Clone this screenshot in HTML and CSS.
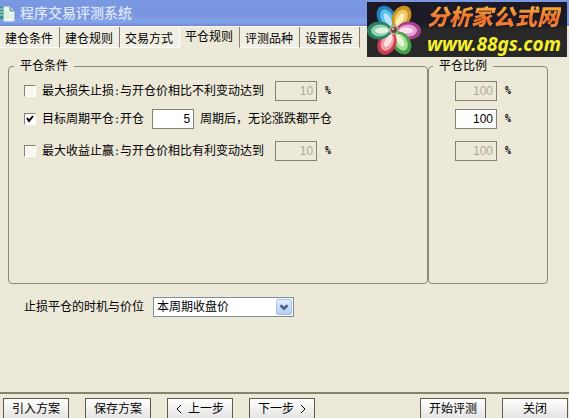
FILE: index.html
```html
<!DOCTYPE html>
<html lang="zh-CN">
<head>
  <meta charset="UTF-8">
  <meta name="viewport" content="width=device-width, initial-scale=1.0">
  <title>程序交易评测系统</title>
  <link rel="stylesheet" href="styles.css">
</head>
<body>
  <!-- 标题栏 -->
  <header class="titlebar">
    <svg class="app-icon" width="16" height="18" viewBox="0 0 16 18">
      <path d="M0 3h6v12H0z" fill="#3d8f8c"/>
      <path d="M0 5h3M0 8h3M0 11h3" stroke="#b8ecd8"/>
      <path d="M4 3h6l4 4v10H4z" fill="#eef8ee" stroke="#d5ebe8"/>
      <path d="M10 3v4h4" fill="#a9cdd0" stroke="#5d8f9c"/>
      <path d="M6 7v8M8 8v7M11 10v5" stroke="#c4e4cc"/>
    </svg>
    <h1>程序交易评测系统</h1>
  </header>

  <!-- 网站标志 -->
  <a class="logo" href="#">
    <svg class="flower" width="54" height="54" viewBox="-27 -27 54 54">
      <g transform="rotate(-30)"><ellipse cy="-15" rx="9" ry="12" fill="#2483bf"/><ellipse cy="-14" rx="6" ry="9" fill="#5fc0ec"/><ellipse cy="-12" rx="3" ry="7" fill="#b5e4f6"/></g>
      <g transform="rotate(30)"><ellipse cy="-15" rx="9" ry="12" fill="#c99222"/><ellipse cy="-14" rx="6" ry="9" fill="#efc865"/><ellipse cy="-12" rx="3" ry="7" fill="#fcf0b8"/></g>
      <g transform="rotate(92)"><ellipse cy="-15" rx="9" ry="12" fill="#a5428f"/><ellipse cy="-14" rx="6" ry="9" fill="#e8a0d0"/><ellipse cy="-12" rx="3" ry="7" fill="#fbe0f0"/></g>
      <g transform="rotate(150)"><ellipse cy="-15" rx="9" ry="12" fill="#479e48"/><ellipse cy="-14" rx="6" ry="9" fill="#a8dc98"/><ellipse cy="-12" rx="3" ry="7" fill="#e6f7d2"/></g>
      <g transform="rotate(208)"><ellipse cy="-15" rx="9" ry="12" fill="#cc3e52"/><ellipse cy="-14" rx="6" ry="9" fill="#f2a0a8"/><ellipse cy="-12" rx="3" ry="7" fill="#fde2de"/></g>
      <g transform="rotate(268)"><ellipse cy="-15" rx="9" ry="12" fill="#2b8064"/><ellipse cy="-14" rx="6" ry="9" fill="#8fd0b0"/><ellipse cy="-12" rx="3" ry="7" fill="#e2f5e4"/></g>
      <circle r="5" fill="#b8a888"/>
      <circle r="3" fill="#5a4c40"/>
      <circle cx="-1" cy="-1" r="1" fill="#f3ead0"/>
    </svg>
    <span class="logo-text">
      <span class="logo-name">分析家公式网</span>
      <span class="logo-url">www.88gs.com</span>
    </span>
  </a>

  <!-- 选项卡 -->
  <nav class="tabs">
    <a href="#">建仓条件</a>
    <a href="#">建仓规则</a>
    <a href="#">交易方式</a>
    <a href="#" class="active">平仓规则</a>
    <a href="#">评测品种</a>
    <a href="#">设置报告</a>
  </nav>

  <main class="content">
    <div class="groups">
      <fieldset class="group conditions">
        <legend>平仓条件</legend>
        <div class="row">
          <input type="checkbox" id="maxLoss">
          <label for="maxLoss">最大损失止损<span class="half">:</span>与开仓价相比不利变动达到</label>
          <input type="text" class="num" value="10" aria-label="不利变动" disabled>
          <span class="unit half">%</span>
        </div>
        <div class="row">
          <input type="checkbox" id="period" checked>
          <label for="period">目标周期平仓<span class="half">:</span>开仓</label>
          <input type="text" class="num num-inline" id="periodCount" value="5">
          <label for="periodCount">周期后，无论涨跌都平仓</label>
        </div>
        <div class="row row-last">
          <input type="checkbox" id="maxProfit">
          <label for="maxProfit">最大收益止赢<span class="half">:</span>与开仓价相比有利变动达到</label>
          <input type="text" class="num" value="10" aria-label="有利变动" disabled>
          <span class="unit half">%</span>
        </div>
      </fieldset>

      <fieldset class="group ratios">
        <legend>平仓比例</legend>
        <div class="row">
          <input type="text" class="num" value="100" aria-label="最大损失平仓比例" disabled>
          <span class="unit half">%</span>
        </div>
        <div class="row">
          <input type="text" class="num" value="100" aria-label="目标周期平仓比例">
          <span class="unit half">%</span>
        </div>
        <div class="row row-last">
          <input type="text" class="num" value="100" aria-label="最大收益平仓比例" disabled>
          <span class="unit half">%</span>
        </div>
      </fieldset>
    </div>

    <div class="timing">
      <label for="timing">止损平仓的时机与价位</label>
      <div class="select-box">
        <select id="timing">
          <option>本周期收盘价</option>
        </select>
        <svg class="arrow" width="16" height="16" viewBox="0 0 16 16">
          <path d="M4 6l4 4 4-4" fill="none" stroke="#4d6185" stroke-width="3"/>
        </svg>
      </div>
    </div>
  </main>

  <!-- 底部按钮 -->
  <footer class="actions">
    <button type="button">引入方案</button>
    <button type="button">保存方案</button>
    <button type="button">
      <svg width="6" height="10" viewBox="0 0 6 10"><path d="M5 1L1 5l4 4" fill="none" stroke="#000"/></svg>
      上一步
    </button>
    <button type="button">
      下一步
      <svg width="6" height="10" viewBox="0 0 6 10"><path d="M1 1l4 4-4 4" fill="none" stroke="#000"/></svg>
    </button>
    <button type="button" class="start">开始评测</button>
    <button type="button">关闭</button>
  </footer>
</body>
</html>
```
FILE: styles.css
```css
/* General */
* {
  box-sizing: border-box;
}

body {
  display: flex;
  flex-direction: column;
  position: relative;
  height: 100vh;
  margin: 0;
  overflow: hidden;
  background-color: #ece9d8;
  color: #000;
  font-family: "Liberation Sans", "Noto Sans CJK SC", sans-serif;
  font-size: 12px;
  line-height: 16px;
}

input,
select,
button {
  font: inherit;
  color: inherit;
}

/* 标题栏 */
.titlebar {
  display: flex;
  align-items: center;
  gap: 4px;
  height: 26px;
  background: linear-gradient(#7b98e2, #7b95df 60%, #83a3ea 85%, #7089d0);
}

.titlebar h1 {
  margin: 0;
  color: #dbe9fa;
  font-size: 14px;
  font-weight: 500;
}

/* 网站标志 */
.logo {
  display: flex;
  align-items: center;
  gap: 6px;
  position: absolute;
  top: 2px;
  right: 2px;
  width: 200px;
  height: 55px;
  background: linear-gradient(#1b1a26 40%, #282828 50%);
  text-decoration: none;
}

.logo-text {
  display: flex;
  flex-direction: column;
  gap: 4px;
}

.logo-name {
  background: linear-gradient(#f8b03c, #ee6a28 55%, #f59a3a);
  background-clip: text;
  color: transparent;
  font-size: 22px;
  font-weight: 900;
  font-style: italic;
  line-height: 24px;
}

.logo-url {
  color: #f6f02c;
  font-family: "Noto Sans", sans-serif;
  font-size: 19px;
  font-weight: bold;
  font-style: italic;
  line-height: 20px;
}

/* 选项卡 */
.tabs {
  display: flex;
  height: 22px;
  border-top: 1px solid #f8f7f0;
}

.tabs a {
  width: 60px;
  padding: 4px 0 0 5px;
  border-right: 1px solid #85826f;
  border-bottom: 1px solid #fff;
  background-color: #f1efe3;
  color: #000;
  text-decoration: none;
}

.tabs a.active {
  padding-top: 2px;
  border-bottom-color: #ece9d8;
  background-color: #ece9d8;
}

.tabs a:nth-child(3) {
  border-right-color: #fff;
}

/* 条件与比例 */
.content {
  flex: 1;
  padding: 10px 21px 0 8px;
}

.groups {
  display: flex;
}

.group {
  min-width: 0;
  height: 226px;
  margin: 0;
  padding: 7px 0 0 15px;
  border: 1px solid #8b897c;
  border-radius: 4px;
}

.group legend {
  margin-left: -10px;
  padding: 0 6px;
}

.conditions {
  flex: 1;
}

.ratios {
  width: 120px;
  padding-left: 26px;
}

.ratios legend {
  margin-left: -22px;
}

.row {
  display: flex;
  align-items: center;
  height: 20px;
  margin-bottom: 8px;
}

.row-last {
  margin-top: 12px;
}

.row input[type="checkbox"] {
  appearance: none;
  width: 12px;
  height: 12px;
  margin: 0 6px 0 0;
  border: 1px solid #fff;
  border-top-color: #85826f;
  border-left-color: #85826f;
  background-color: #f7f6ef;
}

.row input[type="checkbox"]:checked {
  background: #fff url("data:image/svg+xml,%3Csvg xmlns='http://www.w3.org/2000/svg' viewBox='0 0 10 10'%3E%3Cpath d='M2 4l2 3 4-5' fill='none' stroke='%23000' stroke-width='2'/%3E%3C/svg%3E");
}

.num {
  width: 42px;
  height: 20px;
  padding: 0 3px;
  border: 1px solid #85826f;
  border-radius: 0;
  background-color: #fff;
  text-align: right;
}

.num:disabled {
  background-color: #ece9d8;
  color: #aca899;
}

.conditions .num {
  margin-left: 11px;
}

.conditions .num-inline {
  margin: 0 6px 0 8px;
}

/* 半角符号 */
.half {
  font-family: "DejaVu Sans Mono", monospace;
  font-size: 10px;
}

.unit {
  margin-left: 8px;
  font-weight: bold;
}

/* 时机与价位 */
.timing {
  display: flex;
  align-items: center;
  gap: 9px;
  margin: 13px 0 0 16px;
}

.select-box {
  position: relative;
  width: 141px;
}

.select-box select {
  display: block;
  appearance: none;
  width: 100%;
  height: 20px;
  padding: 0 20px 0 3px;
  border: 1px solid #7b8f99;
  border-radius: 0;
  background-color: #fff;
}

.arrow {
  position: absolute;
  top: 2px;
  right: 2px;
  border: 1px solid #a9bfe8;
  border-radius: 2px;
  background: linear-gradient(#e3edfd, #b5cdf5);
  pointer-events: none;
}

/* 底部按钮 */
.actions {
  display: flex;
  gap: 16px;
  height: 26px;
  padding: 4px 1px 0 3px;
  border-top: 2px solid #85826f;
}

.actions button {
  display: flex;
  align-items: center;
  justify-content: center;
  gap: 6px;
  width: 66px;
  height: 20px;
  padding: 0;
  border: 1px solid #5d5b50;
  border-bottom: 0;
  border-radius: 0;
  background: linear-gradient(#fff, #e4e4e2);
}

.actions .start {
  margin-left: auto;
}
```
